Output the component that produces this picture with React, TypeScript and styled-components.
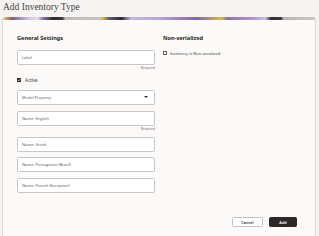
import React from 'react';
import styled, { createGlobalStyle } from 'styled-components';

const GlobalStyle = createGlobalStyle`
  html, body {
    margin: 0;
    padding: 0;
    background: #f5f4f2;
  }
  body {
    font-family: "Noto Sans", "Open Sans", sans-serif;
    overflow: hidden;
  }
`;

interface IFieldProps {
  placeholder: string;
  required?: boolean;
  select?: boolean;
}

const fields: IFieldProps[] = [
  { placeholder: 'Name: English', required: true },
  { placeholder: 'Name: Greek' },
  { placeholder: 'Name: Portuguese (Brazil)' },
  { placeholder: 'Name: French (European)' },
];

function Field({ placeholder, required, select }: IFieldProps) {
  return (
    <FieldWrap>
      <InputBox>
        <Placeholder>{placeholder}</Placeholder>
        {select && <Caret />}
      </InputBox>
      {required && <Help>Required</Help>}
    </FieldWrap>
  );
}

function App() {
  return (
    <Page>
      <GlobalStyle />
      <Title>Add Inventory Type</Title>
      <Card>
        <Band />
        <Body>
          <Column>
            <Heading>General Settings</Heading>
            <Field placeholder="Label" required />
            <CheckRow>
              <CheckBox checked>
                <svg width="4" height="4" viewBox="0 0 10 10">
                  <path d="M2 5.2 L4.2 7.4 L8.2 2.8" fill="none" stroke="#fff" strokeWidth="1.8" />
                </svg>
              </CheckBox>
              <CheckLabel>Active</CheckLabel>
            </CheckRow>
            <Field placeholder="Model Property" select />
            {fields.map((item, index) => (
              <Field key={index} {...item} />
            ))}
          </Column>
          <Column>
            <Heading>Non-serialized</Heading>
            <CheckRow small>
              <CheckBox />
              <CheckLabel small>Inventory is Non-serialized</CheckLabel>
            </CheckRow>
          </Column>
        </Body>
        <Footer>
          <Button>Cancel</Button>
          <Button primary>Add</Button>
        </Footer>
      </Card>
    </Page>
  );
}

const Page = styled.div`
  height: 236px;
  display: flex;
  flex-direction: column;
  padding: 0 3px 0 2px;
  box-sizing: border-box;
`;
const Title = styled.h1`
  margin: 0;
  padding: 2px 0 0 1px;
  height: 17px;
  flex-shrink: 0;
  font-family: "Liberation Serif", "DejaVu Serif", serif;
  font-weight: 400;
  font-size: 9.5px;
  line-height: 10px;
  color: #45423e;
  box-sizing: border-box;
`;
const Card = styled.div`
  flex: 1;
  display: flex;
  flex-direction: column;
  background: #fbfaf9;
  border: 1px solid #dcdad7;
  border-top: none;
  border-bottom: none;
  border-radius: 3px 3px 0 0;
  overflow: hidden;
`;
const Band = styled.div`
  height: 3px;
  flex-shrink: 0;
  background: linear-gradient(
    90deg,
    #d9d2e6 0%,
    #c9a64a 1%,
    #7a5c8c 3%,
    #cbbde0 8%,
    #e6def0 11%,
    #8a6fa3 13%,
    #2f2b30 16%,
    #3a3a3a 19%,
    #bdbab7 20%,
    #c6c3c0 31%,
    #d7b347 32%,
    #6a5480 34%,
    #4a4049 36%,
    #2e2a2c 38%,
    #c4b6dc 41%,
    #b8a6d4 50%,
    #9d86bc 56%,
    #7e68a0 62%,
    #d8b94c 70%,
    #8d74ab 72%,
    #a994c8 80%,
    #cdbfe2 84%,
    #2f2c2e 86%,
    #3a3838 89%,
    #b9b6b3 90%,
    #c8c5c2 100%
  );
`;
const Body = styled.div`
  flex: 1;
  display: grid;
  grid-template-columns: 138px 1fr;
  column-gap: 8px;
  padding: 15px 15px 0 14px;
`;
const Column = styled.div`
  display: flex;
  flex-direction: column;
`;
const Heading = styled.div`
  font-size: 5.6px;
  font-weight: 700;
  line-height: 7px;
  color: #1f1d1b;
  margin-bottom: 8px;
`;
const FieldWrap = styled.div`
  display: flex;
  flex-direction: column;
  margin-bottom: 5.8px;
`;
const InputBox = styled.div`
  height: 15px;
  box-sizing: border-box;
  border: 1px solid #c9c7c4;
  border-radius: 1.5px;
  background: #fff;
  display: flex;
  align-items: center;
  justify-content: space-between;
  padding: 0 5px 0 4px;
`;
const Placeholder = styled.span`
  font-size: 4px;
  color: #5f5d5a;
`;
const Caret = styled.span`
  width: 0;
  height: 0;
  border-left: 2px solid transparent;
  border-right: 2px solid transparent;
  border-top: 2.2px solid #2b2927;
  margin-right: 1px;
`;
const Help = styled.div`
  align-self: flex-end;
  font-size: 3.3px;
  line-height: 4px;
  color: #77746f;
  margin-top: 1px;
`;
const CheckRow = styled.div<{ small?: boolean }>`
  display: flex;
  align-items: center;
  gap: ${(p) => (p.small ? '3px' : '4px')};
  height: 8px;
  margin: ${(p) => (p.small ? '-1px 0 0' : '0 0 6.2px')};
`;
const CheckBox = styled.span<{ checked?: boolean }>`
  width: 4px;
  height: 4px;
  box-sizing: border-box;
  border-radius: 0.5px;
  display: flex;
  align-items: center;
  justify-content: center;
  background: ${(p) => (p.checked ? '#2b2927' : '#fff')};
  border: ${(p) => (p.checked ? 'none' : '0.6px solid #5e5b57')};
`;
const CheckLabel = styled.span<{ small?: boolean }>`
  font-size: ${(p) => (p.small ? '4px' : '4.5px')};
  color: #3d3b38;
`;
const Footer = styled.div`
  display: flex;
  justify-content: flex-end;
  gap: 6px;
  padding: 0 18px 9px 0;
`;
const Button = styled.button<{ primary?: boolean }>`
  height: 10px;
  width: ${(p) => (p.primary ? '28px' : '31px')};
  padding: 0;
  font-family: "Noto Sans", sans-serif;
  font-size: 3.8px;
  font-weight: 600;
  border-radius: 1.5px;
  border: 1px solid ${(p) => (p.primary ? '#2b2927' : '#c4c2bf')};
  background: ${(p) => (p.primary ? '#2b2927' : '#fff')};
  color: ${(p) => (p.primary ? '#fff' : '#3a3835')};
`;

export default App;
